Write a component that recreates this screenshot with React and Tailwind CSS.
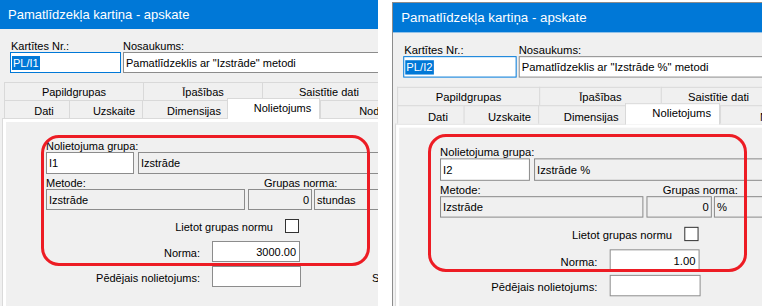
import React from 'react';

const FONT = "font-['Liberation_Sans',Arial,sans-serif]";

const LEFT = {
  nr: 'PL/I1',
  name: 'Pamatlīdzeklis ar "Izstrāde" metodi',
  group: 'I1',
  groupName: 'Izstrāde',
  unit: 'stundas',
  norma: '3000.00',
};

const RIGHT = {
  nr: 'PL/I2',
  name: 'Pamatlīdzeklis ar "Izstrāde %" metodi',
  group: 'I2',
  groupName: 'Izstrāde %',
  unit: '%',
  norma: '1.00',
};

// teksta lauks (balts) vai tikai lasāms (pelēks)
const Field = ({ className = '', readOnly, right, children }) => (
  <div
    className={`flex items-center h-[21px] border border-[#8c8c8c] px-[2px] leading-[12px] whitespace-nowrap overflow-hidden ${
      readOnly ? 'bg-[#f0f0f0]' : 'bg-white'
    } ${right ? 'justify-end' : ''} ${className}`}
  >
    {children}
  </div>
);

const Tab = ({ className = '', children }) => (
  <div className={`h-full border-t border-l border-[#d9d9d9] bg-[#f0f0f0] leading-[12px] whitespace-nowrap flex justify-center ${className}`}>
    {children}
  </div>
);

const Dialog = ({ d, edge, lastTab }) => (
  <div className={`w-[520px] h-[320px] flex flex-col text-[11px] text-black ${FONT}`}>
    {/* virsraksts */}
    <div className="h-[29px] shrink-0 bg-[#0078d7] text-white text-[13px] pl-[8px] flex items-center">
      Pamatlīdzekļa kartiņa - apskate
    </div>

    <div className="flex flex-1">
      {edge && (
        <>
          <div className="w-[2px] bg-white" />
          <div className="w-px bg-[#a0a0a0]" />
        </>
      )}
      <div className="flex-1 bg-[#f0f0f0] pt-[11px]">
        {/* kartītes nr un nosaukums */}
        <div className="flex gap-[2px] pl-[10px]">
          <div className="w-[111px]">
            <div className="h-[12px] leading-[12px] pl-[1px]">Kartītes Nr.:</div>
            <div className="flex items-center h-[21px] border border-[#0078d7] bg-white pl-px">
              <span className="bg-[#0078d7] text-white leading-[14px] px-px">{d.nr}</span>
            </div>
          </div>
          <div className="w-[400px]">
            <div className="h-[12px] leading-[12px]">Nosaukums:</div>
            <Field className="px-[1px]">{d.name}</Field>
          </div>
        </div>

        {/* cilnes */}
        <div className="mt-[9px] ml-[4px] flex h-[18px]">
          <Tab className="w-[139px] pt-[3px]">Papildgrupas</Tab>
          <Tab className="w-[119px] pt-[3px]">Īpašības</Tab>
          <Tab className={`${lastTab} pt-[3px] border-r`}>Saistītie dati</Tab>
        </div>
        <div className="ml-[4px] flex h-[18px]">
          <Tab className="w-[65px] pt-[4px] pl-[14px]">Dati</Tab>
          <Tab className="w-[73px] pt-[4px] pl-[16px]">Uzskaite</Tab>
          <Tab className="w-[85px] pt-[4px] pl-[18px]">Dimensijas</Tab>
          <div className="relative z-10 -mt-[2px] h-[21px] w-[93px] bg-white border-t border-l border-r border-[#d9d9d9] pt-[3px] pl-[18px] leading-[12px] flex justify-center">
            Nolietojums
          </div>
          <Tab className="w-[100px] pt-[4px] pl-[14px]">Nodokļi</Tab>
        </div>

        {/* cilnes saturs */}
        <div className="ml-[2px] border-t border-l border-[#dadada] bg-white pt-[3px] pl-[3px] h-[200px]">
          <div className="bg-[#f0f0f0] h-full pl-[40px] pt-[18px]">
            <div className="h-[12px] leading-[12px]">Nolietojuma grupa:</div>
            <div className="flex gap-[4px]">
              <Field className="w-[88px] h-[22px]">{d.group}</Field>
              <Field readOnly className="w-[300px] h-[22px]">{d.groupName}</Field>
            </div>

            <div className="mt-[3px] h-[12px] leading-[12px] flex">
              <div className="w-[218px]">Metode:</div>
              <div>Grupas norma:</div>
            </div>
            <div className="flex">
              <Field readOnly className="w-[199px]">Izstrāde</Field>
              <Field readOnly right className="w-[64px] ml-[3px]">0</Field>
              <Field readOnly className="w-[100px] ml-[2px]">{d.unit}</Field>
            </div>

            <div className="mt-[9px] h-[14px] flex items-center">
              <div className="w-[227px] text-right leading-[12px] pt-[1px]">Lietot grupas normu</div>
              <div className="ml-[12px] w-[14px] h-[14px] border border-[#333] bg-white" />
            </div>

            <div className="mt-[8px] flex items-center">
              <div className="w-[154px] text-right leading-[12px] pt-[2px]">Norma:</div>
              <Field right className="ml-[12px] w-[88px] pr-[3px]">{d.norma}</Field>
            </div>

            <div className="mt-[4px] flex items-center">
              <div className="w-[154px] text-right leading-[12px] pt-[2px]">Pēdējais nolietojums:</div>
              <Field className="ml-[12px] w-[89px]" />
              <div className="ml-[71px] leading-[12px] pt-[2px] whitespace-nowrap">Sākuma datums:</div>
            </div>
          </div>
        </div>
      </div>
    </div>
  </div>
);

export default function App() {
  return (
    <div className="relative w-[762px] h-[306px] bg-white overflow-hidden flex">
      {/* kreisais ekrānuzņēmums */}
      <div className="w-[378px] h-full overflow-hidden">
        <Dialog d={LEFT} edge lastTab="w-[134px]" />
      </div>

      <div className="w-[14px] h-full bg-white" />

      {/* labais ekrānuzņēmums (nedaudz palielināts) */}
      <div className="w-[370px] h-full pt-[2px]">
        <div className="h-full border-l border-t border-[#8c8c8c] overflow-hidden">
          <div className="origin-top-left scale-[1.022]">
            <Dialog d={RIGHT} lastTab="w-[113px]" />
          </div>
        </div>
      </div>

      {/* sarkanie apļojumi */}
      <div className="absolute left-[41px] top-[135px] w-[329px] h-[131px] border-[3px] border-[#ed1c24] rounded-[18px] pointer-events-none" />
      <div className="absolute left-[428px] top-[134px] w-[319px] h-[138px] border-[3px] border-[#ed1c24] rounded-[18px] pointer-events-none" />
    </div>
  );
}
